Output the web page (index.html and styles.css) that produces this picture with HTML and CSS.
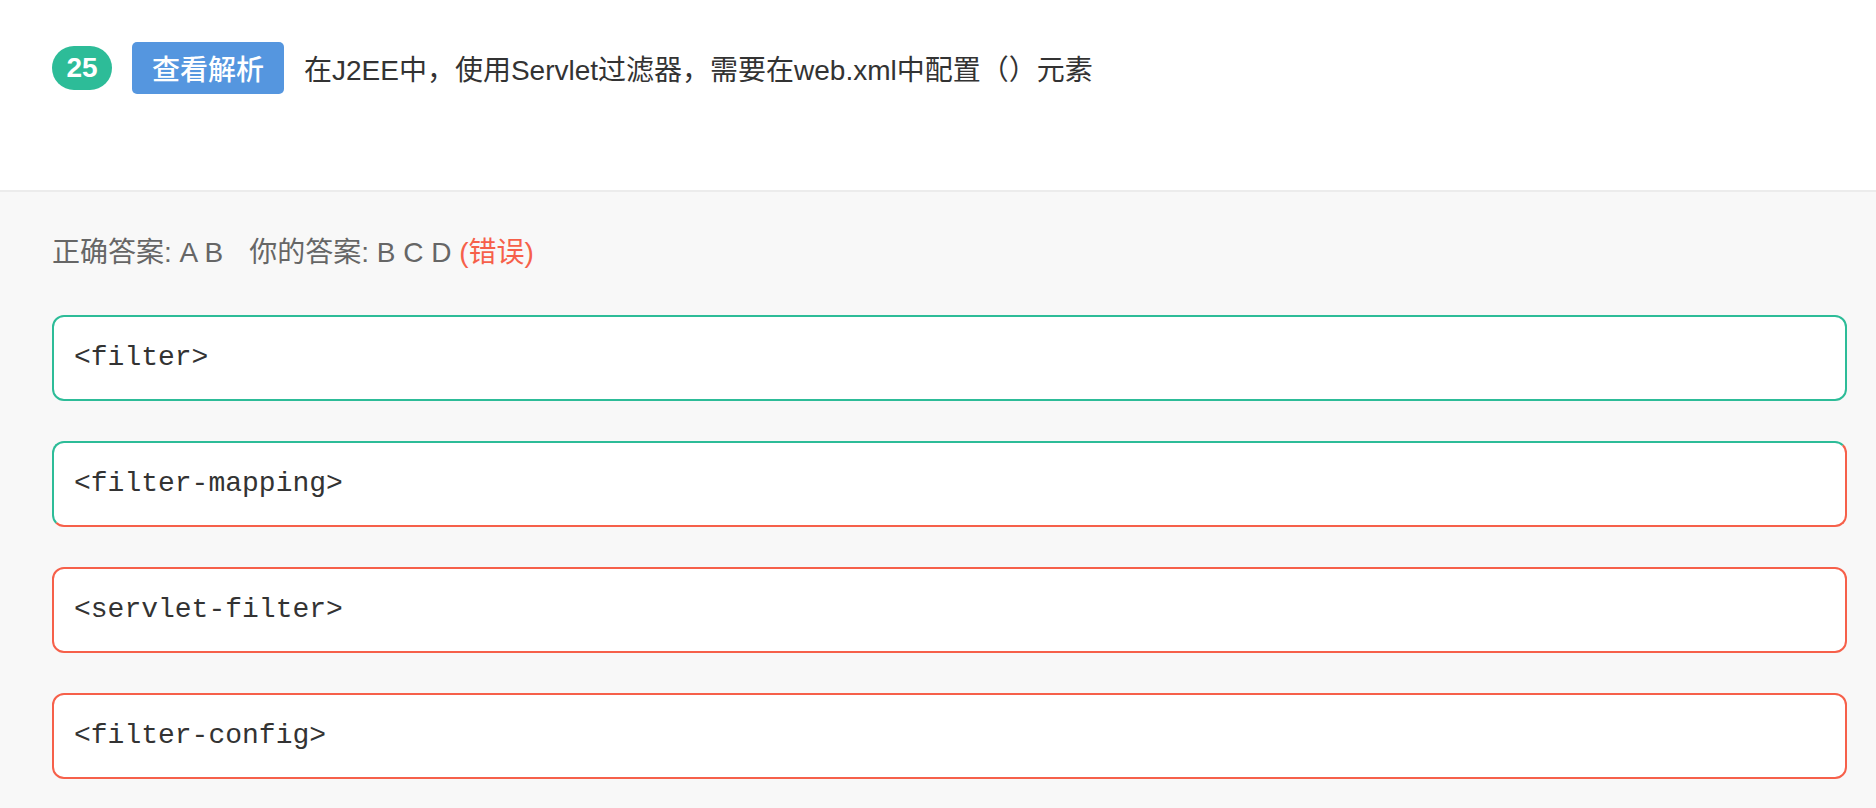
FILE: index.html
```html
<!DOCTYPE html>
<html lang="zh-CN">
<head>
<meta charset="utf-8">
<title>题目 25</title>
<link rel="stylesheet" href="styles.css">
</head>
<body>
<div class="question">
  <div class="q-row">
    <span class="q-num">25</span>
    <span class="q-btn">查看解析</span>
    <span class="q-text">在J2EE中，使用Servlet过滤器，需要在web.xml中配置（）元素</span>
  </div>
</div>
<div class="answers">
  <div class="result"><span class="label">正确答案: A B</span><span class="label mine">你的答案: B C D</span> <span class="wrong">(错误)</span></div>
  <div class="opt opt-right">&lt;filter&gt;</div>
  <div class="opt opt-mixed">&lt;filter-mapping&gt;</div>
  <div class="opt opt-wrong">&lt;servlet-filter&gt;</div>
  <div class="opt opt-wrong">&lt;filter-config&gt;</div>
</div>
</body>
</html>
```

FILE: styles.css
```css
html, body {
  margin: 0;
  padding: 0;
}
body {
  background: #f8f8f8;
  font-family: "Liberation Sans", "Noto Sans CJK SC", sans-serif;
  font-size: 28px;
  color: #333;
}
.question {
  background: #fff;
  height: 192px;
  box-sizing: border-box;
  padding: 42px 52px 0;
  border-bottom: 2px solid #ececec;
}
.q-row {
  display: flex;
  align-items: center;
  height: 52px;
}
.q-num {
  display: flex;
  align-items: center;
  justify-content: center;
  width: 60px;
  height: 44px;
  border-radius: 22px;
  background: #2dbc98;
  color: #fff;
  font-size: 28px;
  font-weight: bold;
  margin-right: 20px;
}
.q-btn {
  display: flex;
  align-items: center;
  justify-content: center;
  width: 152px;
  height: 52px;
  border-radius: 5px;
  background: #5596df;
  color: #fff;
  font-size: 28px;
  font-weight: 500;
  margin-right: 20px;
}
.q-text {
  color: #333;
  font-size: 28px;
}
.answers {
  padding: 41px 29px 0 52px;
}
.result {
  line-height: 40px;
  color: #666;
  margin-bottom: 42px;
  white-space: nowrap;
}
.mine {
  margin-left: 26px;
}
.wrong {
  color: #f6604a;
}
.opt {
  box-sizing: border-box;
  height: 86px;
  line-height: 82px;
  padding: 0 20px;
  background: #fff;
  border: 2px solid #2dbc98;
  border-radius: 12px;
  margin-bottom: 40px;
  font-family: "Courier New", "Courier", "Nimbus Mono PS", "FreeMono", "Liberation Mono", monospace;
  font-size: 28px;
  color: #333;
}
.opt-right {
  border-color: #2dbc98;
}
.opt-mixed {
  border-color: #2dbc98 #f6604a #f6604a #2dbc98;
}
.opt-wrong {
  border-color: #f6604a;
}
```
